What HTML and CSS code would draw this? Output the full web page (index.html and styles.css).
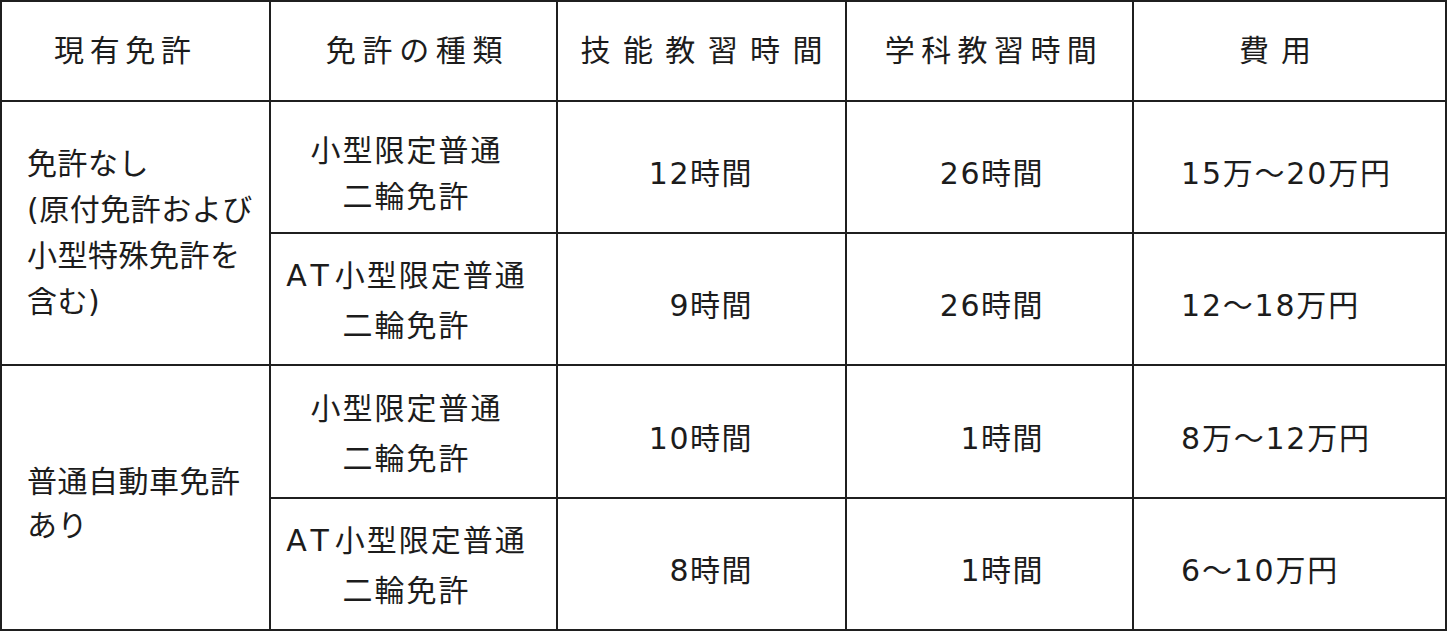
FILE: index.html
```html
<!DOCTYPE html>
<html lang="ja">
<head>
<meta charset="utf-8">
<title>小型二輪免許 教習時間と費用</title>
<link rel="stylesheet" href="styles.css">
</head>
<body>
<table class="fees">
  <colgroup>
    <col class="c-current">
    <col class="c-type">
    <col class="c-skill">
    <col class="c-study">
    <col class="c-cost">
  </colgroup>
  <thead>
    <tr class="head-row">
      <th class="h h-current">現有免許</th>
      <th class="h h-type">免許の種類</th>
      <th class="h h-skill">技能教習時間</th>
      <th class="h h-study">学科教習時間</th>
      <th class="h h-cost">費用</th>
    </tr>
  </thead>
  <tbody>
    <tr class="row r1">
      <td class="current" rowspan="2">免許なし<br>(原付免許および<br>小型特殊免許を<br>含む)</td>
      <td class="type type-first">小型限定普通<br>二輪免許</td>
      <td class="num skill">12時間</td>
      <td class="num study">26時間</td>
      <td class="cost">15万～20万円</td>
    </tr>
    <tr class="row r2">
      <td class="type"><span class="latin">AT</span>小型限定普通<br>二輪免許</td>
      <td class="num skill">9時間</td>
      <td class="num study">26時間</td>
      <td class="cost">12～18万円</td>
    </tr>
    <tr class="row r3">
      <td class="current current-2" rowspan="2">普通自動車免許<br>あり</td>
      <td class="type">小型限定普通<br>二輪免許</td>
      <td class="num skill">10時間</td>
      <td class="num study">1時間</td>
      <td class="cost">8万～12万円</td>
    </tr>
    <tr class="row r4">
      <td class="type"><span class="latin">AT</span>小型限定普通<br>二輪免許</td>
      <td class="num skill">8時間</td>
      <td class="num study">1時間</td>
      <td class="cost">6～10万円</td>
    </tr>
  </tbody>
</table>
</body>
</html>
```

FILE: styles.css
```css
html, body {
  margin: 0;
  padding: 0;
  background: #ffffff;
}

.fees {
  border-collapse: collapse;
  table-layout: fixed;
  width: 1447px;
  font-family: "DejaVu Sans", "Noto Sans CJK JP", sans-serif;
  font-size: 30px;
  font-weight: 400;
  color: #1c1c1c;
}

.c-current { width: 269px; }
.c-type { width: 287px; }
.c-skill { width: 289px; }
.c-study { width: 287px; }
.c-cost { width: 313px; }

.fees th,
.fees td {
  box-sizing: border-box;
  border: 2px solid #1f1f1f;
  padding: 0;
  font-weight: 400;
  vertical-align: middle;
}

.fees .head-row th { height: 100px; }
.fees .r1 td, .fees .r2 td, .fees .r4 td { height: 132px; }
.fees .r3 td { height: 133px; }
.fees td[rowspan] { height: auto; }

.fees .h {
  text-align: center;
  line-height: 40px;
}
.fees .h-current { letter-spacing: 5.7px; padding-left: 5.7px; padding-right: 26px; }
.fees .h-type { letter-spacing: 6.7px; padding-left: 8px; }
.fees .h-skill { letter-spacing: 12.4px; padding-left: 12.4px; }
.fees .h-study { letter-spacing: 6.4px; padding-left: 9px; }
.fees .h-cost { letter-spacing: 12px; padding-left: 12px; padding-right: 29px; }

.fees .current {
  text-align: left;
  padding-left: 25px;
  letter-spacing: 0.5px;
  line-height: 46px;
}
.fees .current-2 {
  padding-top: 12px;
  line-height: 44px;
}

.fees .type {
  text-align: center;
  letter-spacing: 2px;
  line-height: 50px;
  padding-right: 14px;
  padding-top: 4px;
}
.fees .type-first {
  padding-top: 14px;
  line-height: 46px;
}
.fees .latin { letter-spacing: 6px; }

.fees .num {
  text-align: right;
  letter-spacing: 1.5px;
  padding-top: 8px;
}
.fees .skill { padding-right: 92px; }
.fees .study { padding-right: 88px; }

.fees .cost {
  text-align: left;
  letter-spacing: 1.8px;
  padding-left: 47px;
  padding-top: 8px;
}
```
